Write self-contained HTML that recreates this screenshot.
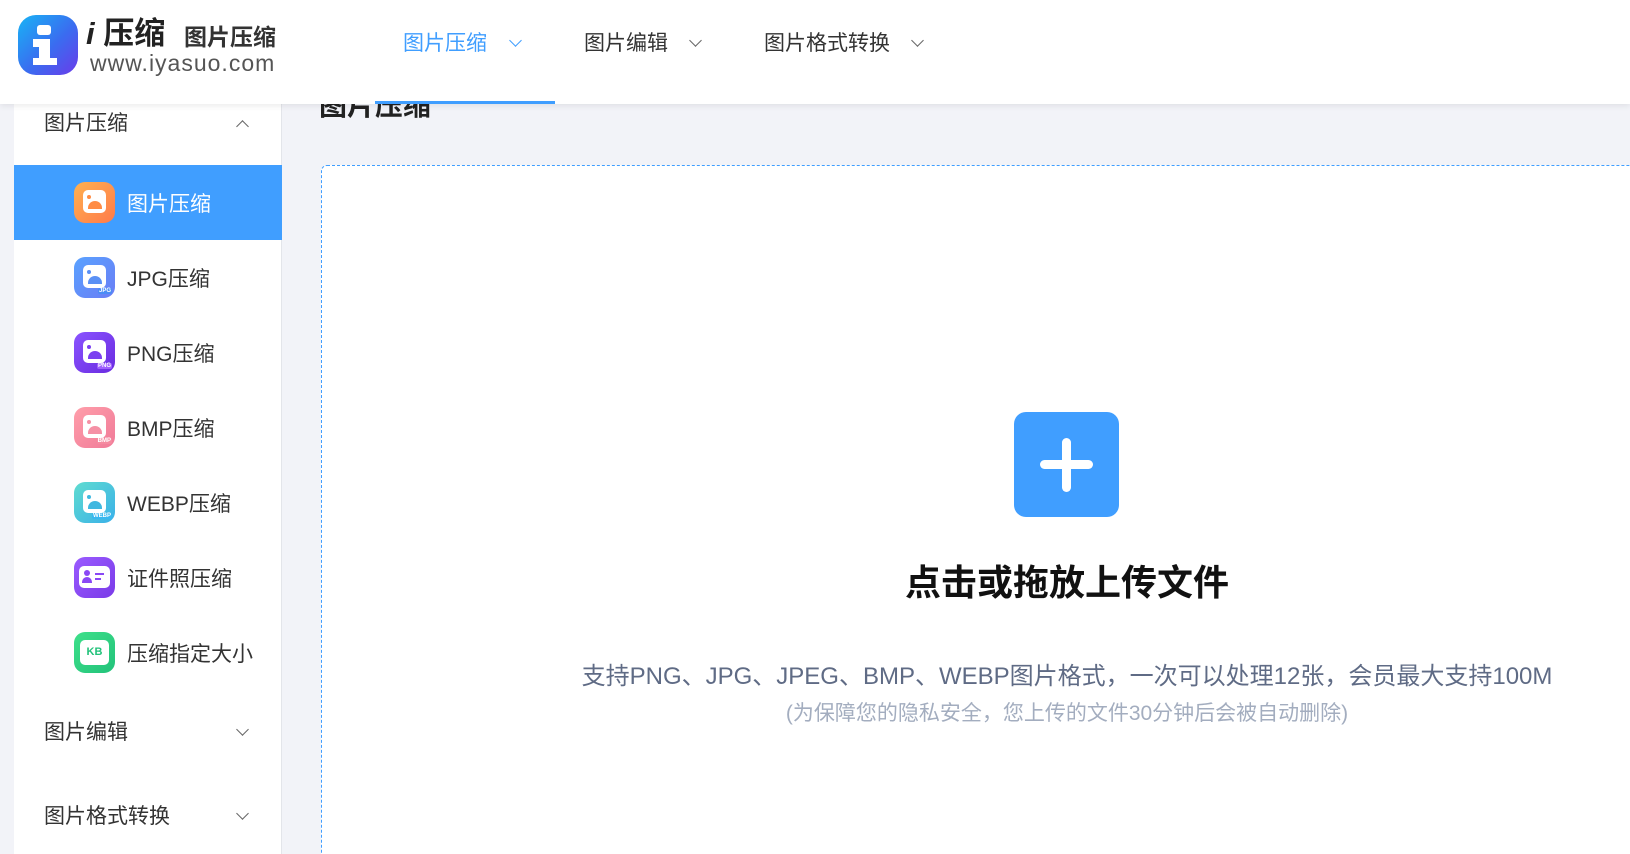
<!DOCTYPE html>
<html><head><meta charset="utf-8"><style>
*{margin:0;padding:0;box-sizing:border-box}
html,body{width:1630px;height:854px;overflow:hidden}
body{background:#f2f3f8;font-family:"Liberation Sans","Noto Sans CJK SC",sans-serif}
#wrap{position:relative;width:1630px;height:854px;overflow:hidden;background:#f2f3f8}
.abs{position:absolute}
.header{left:0;top:0;width:1630px;height:104px;background:#fff;box-shadow:0 2px 6px rgba(0,0,0,.08);z-index:5}
.nav{font-size:21px;color:#333;top:30px;line-height:28px}
.chev{width:9px;height:9px;border-right:1.5px solid #666;border-bottom:1.5px solid #666;transform:rotate(45deg)}
.side{left:14px;top:104px;width:268px;height:750px;background:#fff;border-right:1px solid #e3e5ea}
.item{left:14px;width:268px;height:75px}
.item .ic{position:absolute;left:60px;top:17px;width:41px;height:41px;border-radius:11px}
.item .ic .in{position:absolute;left:9px;top:8px;width:23px;height:23px;background:#fff;border-radius:5px;overflow:hidden}
.item .ic .in .m{position:absolute;left:5px;top:11px;width:14px;height:8px;border-radius:7px 7px 0 0}
.item .ic .in .d{position:absolute;left:4px;top:5px;width:4px;height:4px;border-radius:2px}
.item span{position:absolute;left:113px;top:2px;line-height:75px;font-size:21px;color:#333}
.tag{position:absolute;right:3px;bottom:4px;font-size:6px;color:#fff;font-weight:bold;padding:0 1px;border-radius:2px}
</style></head><body><div id="wrap">
<div class="abs header">
  <div class="abs" style="left:18px;top:15px;width:60px;height:60px;border-radius:18px;background:linear-gradient(135deg,#18b4f5,#3a6cf0 55%,#6a3bea)"></div>
  <div class="abs" style="left:37px;top:25px;width:14px;height:10px;background:#fff;border-radius:3px"></div>
  <div class="abs" style="left:33px;top:39px;width:17px;height:8px;background:#fff"></div>
  <div class="abs" style="left:39px;top:39px;width:11px;height:24px;background:#fff"></div>
  <div class="abs" style="left:33px;top:58px;width:24px;height:7px;background:#fff"></div>
  <div class="abs" style="left:86px;top:14px;font-size:31px;font-weight:bold;color:#222;line-height:40px"><i>i</i> 压缩</div>
  <div class="abs" style="left:184px;top:22px;font-size:23px;font-weight:bold;color:#333;line-height:30px">图片压缩</div>
  <div class="abs" style="left:90px;top:49px;font-size:23px;color:#555;line-height:28px;letter-spacing:1px">www.iyasuo.com</div>
  <div class="abs nav" style="left:403px;color:#409eff">图片压缩</div>
  <div class="abs chev" style="left:511px;top:36px;border-color:#409eff"></div>
  <div class="abs nav" style="left:584px">图片编辑</div>
  <div class="abs chev" style="left:691px;top:36px"></div>
  <div class="abs nav" style="left:764px">图片格式转换</div>
  <div class="abs chev" style="left:913px;top:36px"></div>
  <div class="abs" style="left:375px;top:101px;width:180px;height:3px;background:#409eff"></div>
</div>
<div class="abs" style="left:319px;top:88px;font-size:28px;font-weight:bold;color:#222;line-height:36px;z-index:1">图片压缩</div>
<div class="abs side"></div>
<div class="abs" style="left:44px;top:110px;font-size:21px;color:#333;line-height:28px">图片压缩</div>
<div class="abs chev" style="left:238px;top:122px;transform:rotate(225deg)"></div>

<div class="abs item" style="top:165px;background:#409eff"><div class="ic" style="background:linear-gradient(135deg,#ffb150,#ff7a4a)"><div class="in"><div class="m" style="background:#ff8c45"></div><div class="d" style="background:#ff8c45"></div></div></div><span style="color:#fff">图片压缩</span></div>
<div class="abs item" style="top:240px"><div class="ic" style="background:linear-gradient(135deg,#5aa2ff,#6a7df5)"><div class="in"><div class="m" style="background:#5a90f5"></div><div class="d" style="background:#5a90f5"></div></div><div class="tag" style="background:#4a8cf5">JPG</div></div><span>JPG压缩</span></div>
<div class="abs item" style="top:315px"><div class="ic" style="background:linear-gradient(135deg,#8a54ff,#6a2be0)"><div class="in"><div class="m" style="background:#7a40f0"></div><div class="d" style="background:#7a40f0"></div></div><div class="tag" style="background:#a060ff">PNG</div></div><span>PNG压缩</span></div>
<div class="abs item" style="top:390px"><div class="ic" style="background:linear-gradient(135deg,#ff9eaa,#f07a98)"><div class="in"><div class="m" style="background:#f590a5"></div><div class="d" style="background:#f590a5"></div></div><div class="tag" style="background:#f58aa0">BMP</div></div><span>BMP压缩</span></div>
<div class="abs item" style="top:465px"><div class="ic" style="background:linear-gradient(135deg,#5fdcd0,#3ab0e8)"><div class="in"><div class="m" style="background:#40b8e0"></div><div class="d" style="background:#40b8e0"></div></div><div class="tag" style="background:#38b8f0">WEBP</div></div><span>WEBP压缩</span></div>
<div class="abs item" style="top:540px"><div class="ic" style="background:linear-gradient(135deg,#9a5bff,#7a3be8)"><div class="in" style="left:5px;top:9px;width:31px;height:22px"><div class="abs" style="left:5px;top:4px;width:6px;height:6px;border-radius:3px;background:#8a48f5"></div><div class="abs" style="left:3px;top:11px;width:10px;height:6px;border-radius:5px 5px 0 0;background:#8a48f5"></div><div class="abs" style="left:16px;top:7px;width:9px;height:2px;background:#8a48f5"></div><div class="abs" style="left:16px;top:12px;width:6px;height:2px;background:#8a48f5"></div></div></div><span>证件照压缩</span></div>
<div class="abs item" style="top:615px"><div class="ic" style="background:linear-gradient(135deg,#3ee08a,#22c27a)"><div class="in" style="left:6px;width:29px;height:25px;text-align:center;font-size:11px;font-weight:bold;color:#22c27a;line-height:25px">KB</div></div><span>压缩指定大小</span></div>

<div class="abs" style="left:44px;top:719px;font-size:21px;color:#333;line-height:28px">图片编辑</div>
<div class="abs chev" style="left:238px;top:725px"></div>
<div class="abs" style="left:44px;top:803px;font-size:21px;color:#333;line-height:28px">图片格式转换</div>
<div class="abs chev" style="left:238px;top:809px"></div>

<div class="abs" style="left:321px;top:165px;width:1400px;height:720px;background:#fff;border:1px dashed #409eff;border-radius:6px"></div>
<div class="abs" style="left:1014px;top:412px;width:105px;height:105px;background:#409eff;border-radius:12px"></div>
<div class="abs" style="left:1062px;top:438px;width:9px;height:54px;background:#fff;border-radius:5px"></div>
<div class="abs" style="left:1040px;top:460px;width:53px;height:9px;background:#fff;border-radius:5px"></div>
<div class="abs" style="left:667px;top:560px;width:800px;text-align:center;font-size:36px;font-weight:bold;color:#111;line-height:46px">点击或拖放上传文件</div>
<div class="abs" style="left:417px;top:662px;width:1300px;text-align:center;font-size:24px;color:#5f6b85;line-height:30px">支持PNG、JPG、JPEG、BMP、WEBP图片格式，一次可以处理12张，会员最大支持100M</div>
<div class="abs" style="left:617px;top:701px;width:900px;text-align:center;font-size:21px;color:#a3adbf;line-height:26px">(为保障您的隐私安全，您上传的文件30分钟后会被自动删除)</div>
</div></body></html>
